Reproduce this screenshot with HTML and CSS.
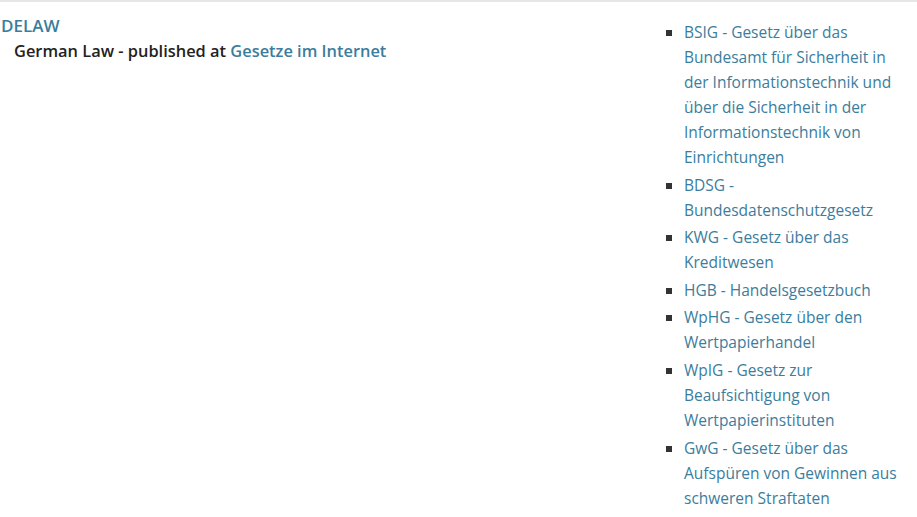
FILE: index.html
```html
<!DOCTYPE html>
<html lang="de">
<head>
<meta charset="utf-8">
<title>DELAW</title>
<link rel="stylesheet" href="styles.css">
</head>
<body>
<div class="page">
  <main class="main">
    <a class="brand" href="#">DELAW</a>
    <p class="tagline">German Law - published at <a href="#">Gesetze im Internet</a></p>
  </main>
  <aside class="sidebar">
    <ul class="laws">
      <li><a href="#">BSIG - Gesetz über das Bundesamt für Sicherheit in der Informationstechnik und über die Sicherheit in der Informationstechnik von Einrichtungen</a></li>
      <li><a href="#">BDSG - Bundesdatenschutzgesetz</a></li>
      <li><a href="#">KWG - Gesetz über das Kreditwesen</a></li>
      <li><a href="#">HGB - Handelsgesetzbuch</a></li>
      <li><a href="#">WpHG - Gesetz über den Wertpapierhandel</a></li>
      <li><a href="#">WpIG - Gesetz zur Beaufsichtigung von Wertpapierinstituten</a></li>
      <li><a href="#">GwG - Gesetz über das Aufspüren von Gewinnen aus schweren Straftaten</a></li>
    </ul>
  </aside>
</div>
</body>
</html>
```

FILE: styles.css
```css
html, body {
  margin: 0;
  padding: 0;
  background: #fff;
}

body {
  font-family: "Open Sans", "Noto Sans", sans-serif;
  font-size: 15.5px;
  color: #222;
  border-top: 2px solid #e6e6e6;
}

a {
  color: #3b7d9c;
  text-decoration: none;
}

.page {
  display: flex;
  justify-content: space-between;
  padding-right: 16px;
}

.main {
  padding: 13px 0 0 1px;
}

.brand {
  display: block;
  font-size: 17px;
  font-weight: 600;
  line-height: 22px;
}

.tagline {
  margin: 3px 0 0 13px;
  font-size: 16.4px;
  font-weight: 600;
  line-height: 22px;
  color: #222;
}

.sidebar {
  width: 234px;
  padding-top: 18px;
}

.laws {
  margin: 0;
  padding: 0 0 0 17px;
  list-style: square;
  line-height: 25px;
}

.laws li {
  margin-bottom: 2.6px;
}

.laws li::marker {
  color: #333;
}
```
